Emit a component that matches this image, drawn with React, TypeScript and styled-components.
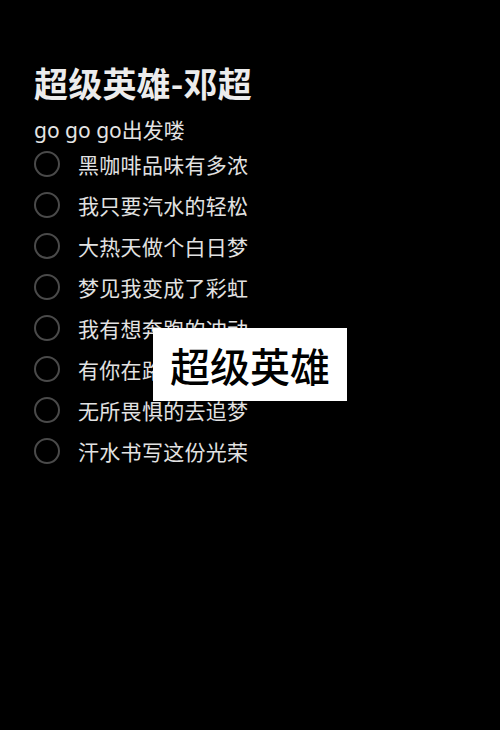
import React from "react";
import styled, { createGlobalStyle } from "styled-components";

const GlobalStyle = createGlobalStyle`
  html, body {
    margin: 0;
    padding: 0;
    background: #000;
  }
  body {
    font-family: "Noto Sans", "Noto Sans CJK SC", sans-serif;
  }
`;

const Page = styled.div`
  position: relative;
  width: 500px;
  height: 730px;
  background: #000;
  box-sizing: border-box;
  padding: 63px 0 0 34px;
  display: flex;
  flex-direction: column;
  overflow: hidden;
`;

const Title = styled.h1`
  margin: 0;
  height: 40px;
  line-height: 40px;
  font-family: "Noto Sans CJK SC", sans-serif;
  font-size: 34px;
  font-weight: 700;
  color: #ececec;
  letter-spacing: 0.2px;
`;

const Subtitle = styled.div`
  margin-top: 14px;
  height: 26px;
  line-height: 26px;
  font-family: "Noto Sans", "Noto Sans CJK SC", sans-serif;
  font-size: 21px;
  color: #e4e4e4;
`;

const List = styled.ul`
  list-style: none;
  margin: 0;
  padding: 0;
  display: flex;
  flex-direction: column;
`;

const Row = styled.li`
  height: 41px;
  display: flex;
  align-items: center;
  gap: 18px;
`;

const Circle = styled.span`
  width: 26px;
  height: 26px;
  box-sizing: border-box;
  border-radius: 50%;
  border: 2px solid #4a4a4a;
  flex-shrink: 0;
`;

const Label = styled.span`
  font-family: "Noto Sans CJK SC", sans-serif;
  font-size: 21px;
  line-height: 28px;
  letter-spacing: 0.3px;
  color: #e2e2e2;
`;

const Caption = styled.div`
  position: absolute;
  left: 153px;
  top: 328px;
  width: 194px;
  height: 73px;
  background: #fff;
  display: flex;
  align-items: center;
  justify-content: center;
  font-family: "Noto Sans CJK SC", sans-serif;
  font-size: 40px;
  font-weight: 500;
  color: #000;
`;

const items = [
  "黑咖啡品味有多浓",
  "我只要汽水的轻松",
  "大热天做个白日梦",
  "梦见我变成了彩虹",
  "我有想奔跑的冲动",
  "有你在路上陪着我",
  "无所畏惧的去追梦",
  "汗水书写这份光荣",
];

export default function App() {
  return (
    <>
      <GlobalStyle />
      <Page>
        <Title>超级英雄-邓超</Title>
        <Subtitle>go go go出发喽</Subtitle>
        <List>
          {items.map((t) => (
            <Row key={t}>
              <Circle />
              <Label>{t}</Label>
            </Row>
          ))}
        </List>
        <Caption>超级英雄</Caption>
      </Page>
    </>
  );
}
